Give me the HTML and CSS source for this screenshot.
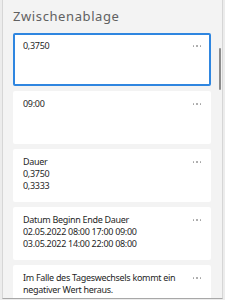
FILE: index.html
```html
<!DOCTYPE html>
<html lang="de">
<head>
<meta charset="utf-8">
<link rel="stylesheet" href="styles.css">
</head>
<body>
<div class="panel">
  <div class="title">Zwischenablage</div>
  <div class="list">
    <div class="card selected">
      <div class="text">0,3750</div>
      <span class="more"><i></i><i></i><i></i></span>
    </div>
    <div class="card">
      <div class="text">09:00</div>
      <span class="more"><i></i><i></i><i></i></span>
    </div>
    <div class="card">
      <div class="text">Dauer<br>0,3750<br>0,3333</div>
      <span class="more"><i></i><i></i><i></i></span>
    </div>
    <div class="card">
      <div class="text">Datum Beginn Ende Dauer<br>02.05.2022 08:00 17:00 09:00<br>03.05.2022 14:00 22:00 08:00</div>
      <span class="more"><i></i><i></i><i></i></span>
    </div>
    <div class="card">
      <div class="text">Im Falle des Tageswechsels kommt ein negativer Wert heraus.</div>
      <span class="more"><i></i><i></i><i></i></span>
    </div>
  </div>
  <div class="scrollbar"></div>
</div>
</body>
</html>
```
FILE: styles.css
```css
html, body {
  margin: 0;
  padding: 0;
}
body {
  width: 225px;
  height: 300px;
  overflow: hidden;
  background: #ececec;
  font-family: "Noto Sans", "Open Sans", "DejaVu Sans", sans-serif;
  padding-left: 2px;
  box-sizing: border-box;
}
.panel {
  position: relative;
  width: 221px;
  height: 299px;
  box-sizing: border-box;
  background: #f3f3f3;
  border-left: 1px solid #d6d6d6;
  border-right: 1px solid #d6d6d6;
  border-bottom: 1px solid #a8a8a8;
  overflow: hidden;
}
.title {
  font-size: 13px;
  line-height: 16px;
  letter-spacing: 0.6px;
  color: #616161;
  padding: 8px 0 0 10px;
  height: 25px;
}
.list {
  display: flex;
  flex-direction: column;
  gap: 5px;
  padding-left: 10px;
  width: 198px;
}
.card {
  position: relative;
  background: #ffffff;
  min-height: 53px;
  box-sizing: border-box;
  border-radius: 2px;
  padding: 7px 24px 8px 10px;
  flex-shrink: 0;
}
.card.selected {
  border: 2px solid #2f86e0;
  padding: 5px 22px 6px 8px;
}
.text {
  font-size: 9px;
  line-height: 12px;
  letter-spacing: -0.3px;
  color: #1f1f1f;
}
.more {
  position: absolute;
  top: 12px;
  right: 10px;
  display: flex;
  gap: 2px;
}
.selected .more {
  top: 10px;
  right: 8px;
}
.more i {
  display: block;
  width: 1.5px;
  height: 1.5px;
  border-radius: 50%;
  background: #a0a0a0;
}
.scrollbar {
  position: absolute;
  left: 216px;
  top: 48px;
  width: 2px;
  height: 42px;
  border-radius: 1px;
  background: #8c8c8c;
}
```
